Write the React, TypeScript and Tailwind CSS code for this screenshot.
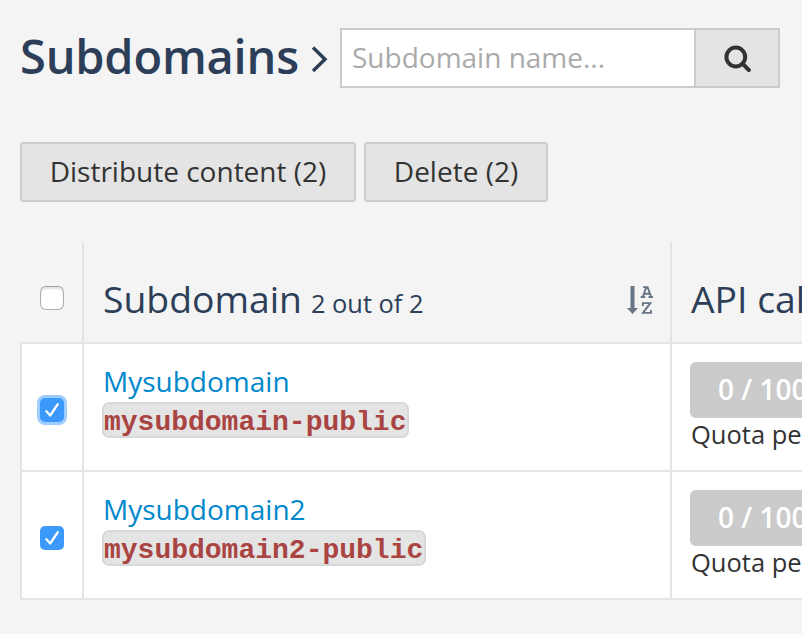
import React from "react";

const ui = "font-['Open_Sans','Noto_Sans',sans-serif]";

function Check({ checked, focused }: { checked?: boolean; focused?: boolean }) {
  if (!checked) {
    return (
      <span className="block size-6 rounded-[6px] border border-[#b0b0b0] border-t-[#a0a0a0] bg-white shadow-[inset_0_2px_2px_#e2e2e2]" />
    );
  }
  return (
    <span
      className={
        "flex size-6 items-center justify-center rounded-[5px] bg-[#3b99fc] " +
        (focused ? "shadow-[0_0_0_3px_#9dccfd]" : "")
      }
    >
      <svg width="24" height="24" viewBox="0 0 24 24" fill="none">
        <path d="M6.3 14.1 L10.2 18.1 L17.7 6.8" stroke="#2583e6" strokeWidth="2.2" strokeLinecap="round" strokeLinejoin="round" />
        <path d="M6.3 13.3 L10.2 17.5 L17.7 6.3" stroke="white" strokeWidth="2.4" strokeLinecap="round" strokeLinejoin="round" />
      </svg>
    </span>
  );
}

function SortIcon() {
  return (
    <svg className="block h-7 w-[26px]" viewBox="0 0 26 28" fill="#677585" stroke="#677585">
      <path d="M3.5 0H7.5V22H11L5.5 28L0 22H3.5Z" stroke="none" />
      <g fill="none" strokeWidth="1.9">
        <path d="M15.8 11L19.2 1.1H20.6L24.2 11M16.2 1.1H20.5M17 7.8H23M13.7 11H18.2M21.5 11H26" />
        <path d="M15.8 20V17.1H23.4L15.9 26.9H24V24" />
      </g>
    </svg>
  );
}

function Row({ name, code, focused }: { name: string; code: string; focused?: boolean }) {
  return (
    <div className="flex h-32 border-b-2 border-l-2 border-[#e4e4e4] bg-white">
      <div className="flex w-[62px] shrink-0 justify-center border-r-2 border-[#e4e4e4] pt-[54px]">
        <Check checked focused={focused} />
      </div>
      <div className="w-[588px] shrink-0 border-r-2 border-[#e4e4e4] pl-[18px] pt-[18px]">
        <a className="block h-10 pl-px text-[28px] leading-[38px] text-[#0088cc]">{name}</a>
        <code className="inline-block h-9 rounded-[7px] border-2 border-[#d8d8d8] bg-[#e4e4e4] pr-[1px] align-top font-['Liberation_Mono',monospace] text-[28px] leading-[37px] font-bold text-[#a94442]">
          {code}
        </code>
      </div>
      <div className="w-[240px] shrink-0 pl-[18px] pt-[18px]">
        <div className="h-14 rounded-[6px] bg-[#cbcbcb] pl-7 text-[28px] leading-[54px] font-semibold whitespace-nowrap text-white">
          0 / 1000
        </div>
        <div className="pl-px text-[25.5px] leading-[32px] whitespace-nowrap text-[#333333]">Quota per day</div>
      </div>
    </div>
  );
}

export default function App() {
  return (
    <div className={`h-[634px] w-[802px] overflow-hidden bg-[#f4f4f4] pl-5 pt-7 text-[#333333] ${ui}`}>
      <header className="flex h-[60px]">
        <h1 className="w-[291px] text-[47px] leading-[57px] font-semibold tracking-[-0.2px] text-[#2c3e58]">Subdomains</h1>
        <svg className="mt-[17px] h-7 w-[29px] shrink-0" viewBox="0 0 29 28" fill="none" stroke="#2c3e58" strokeWidth="3.4">
          <path d="M2 2.5L14 14.2L2 26" />
        </svg>
        <div className="flex w-[440px] border-2 border-[#cbcbcb]">
          <div className="w-[354px] border-r-2 border-[#cbcbcb] bg-white pl-[10px] text-[28px] leading-[54px] text-[#aaaaaa]">
            Subdomain name...
          </div>
          <button className="flex flex-1 items-center justify-center bg-[#e4e4e4]">
            <svg width="28" height="28" viewBox="0 0 28 28" fill="none" stroke="#333333">
              <circle cx="12.8" cy="13" r="9.4" strokeWidth="4" />
              <path d="M19.5 19.7L25.8 26" strokeWidth="4" strokeLinecap="round" />
            </svg>
          </button>
        </div>
      </header>

      <div className="mt-[54px] flex h-[60px] gap-2">
        <button className="w-[336px] rounded-[3px] border-2 border-[#cbcbcb] bg-[#e4e4e4] pb-1 text-[28px] leading-[54px] whitespace-nowrap">
          Distribute content (2)
        </button>
        <button className="w-[184px] rounded-[3px] border-2 border-[#cbcbcb] bg-[#e4e4e4] pb-1 text-[28px] leading-[54px] whitespace-nowrap">
          Delete (2)
        </button>
      </div>

      <section className="mt-10 w-[892px]">
        <div className="flex h-[102px] border-b-2 border-[#e4e4e4]">
          <div className="flex w-16 shrink-0 justify-end border-r-2 border-[#e4e4e4] pt-11 pr-[18px]">
            <Check />
          </div>
          <div className="flex w-[588px] shrink-0 justify-between border-r-2 border-[#e4e4e4] pr-[17px] pl-[19px]">
            <div className="flex items-baseline gap-[9px] pt-[30px] text-[#2c3e58]">
              <h2 className="text-[37.3px] leading-[54px]">Subdomain</h2>
              <span className="text-[25.4px]">2 out of 2</span>
            </div>
            <div className="pt-11">
              <SortIcon />
            </div>
          </div>
          <h2 className="shrink-0 pt-[30px] pl-[19px] text-[37.3px] leading-[54px] whitespace-nowrap text-[#2c3e58]">API calls</h2>
        </div>
        <Row name="Mysubdomain" code="mysubdomain-public" focused />
        <Row name="Mysubdomain2" code="mysubdomain2-public" />
      </section>
    </div>
  );
}
